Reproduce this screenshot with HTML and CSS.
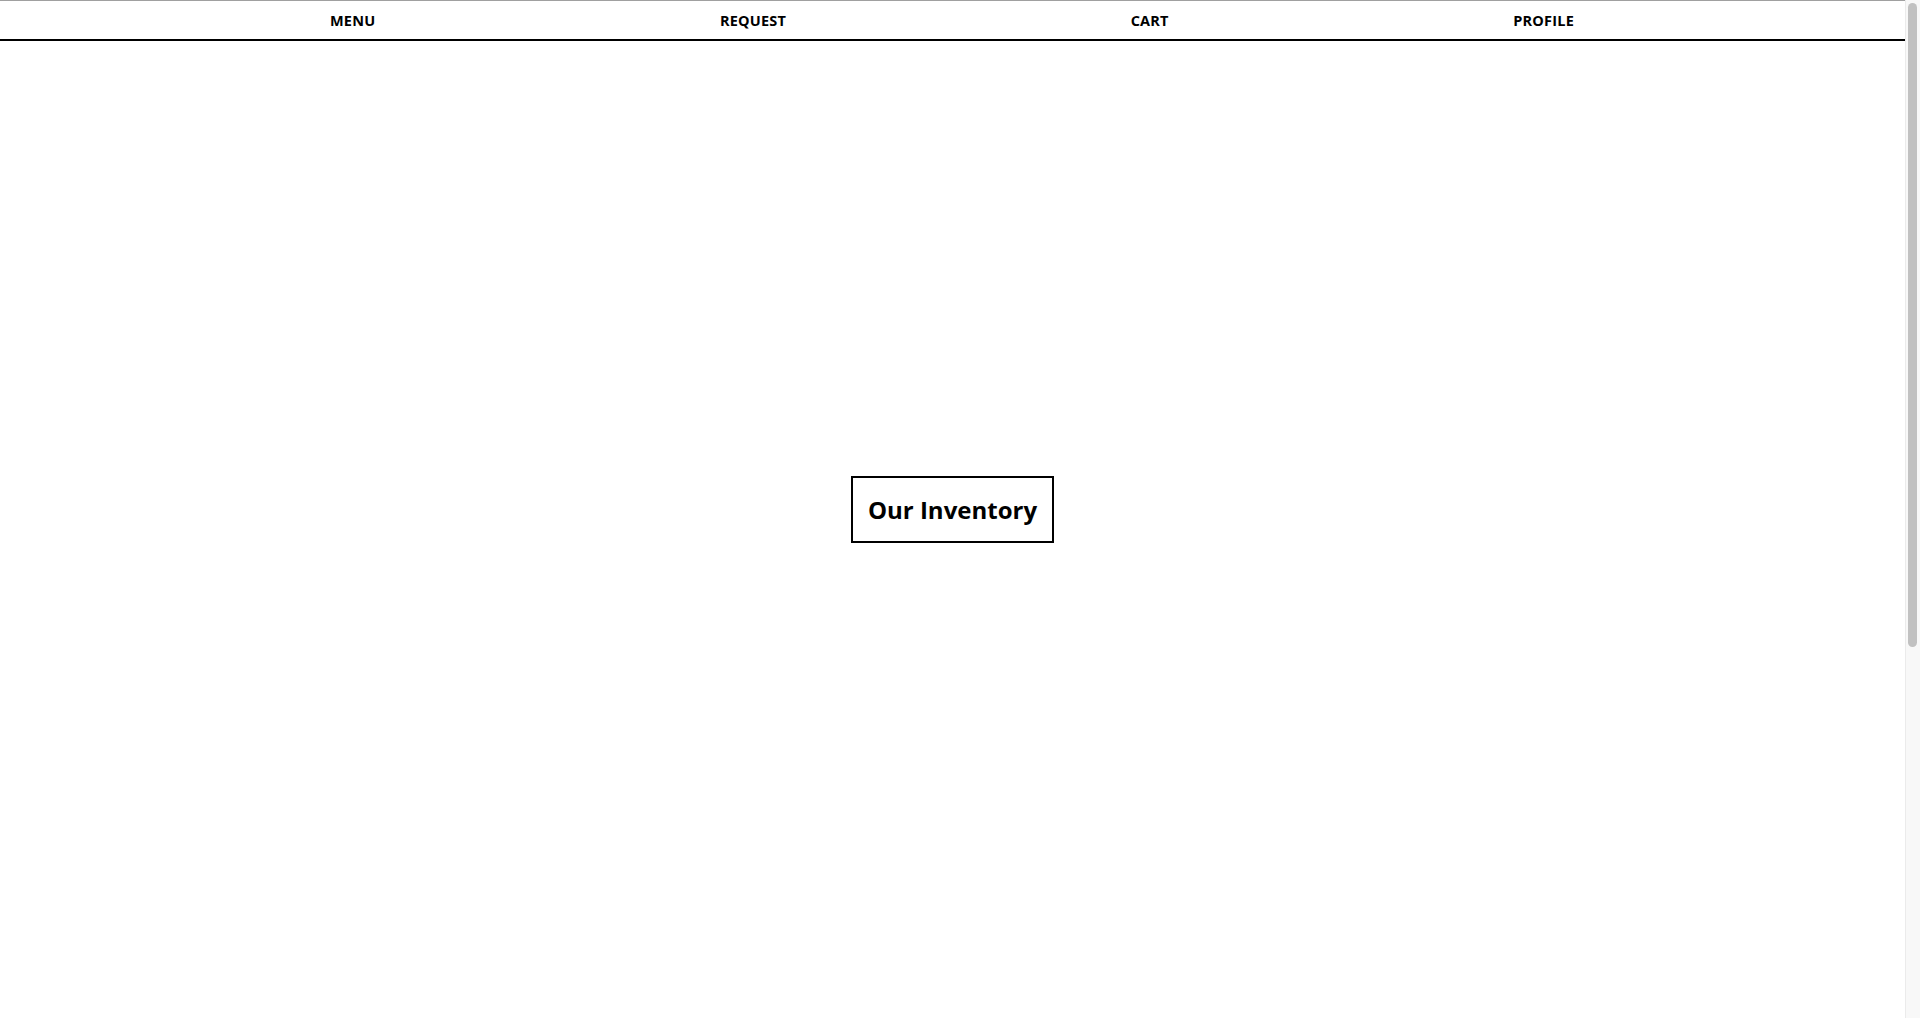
FILE: index.html
```html
<!DOCTYPE html>
<html lang="en">
<head>
<meta charset="utf-8">
<title>Our Inventory</title>
<link rel="stylesheet" href="styles.css">
</head>
<body>
<div class="hero">
  <nav class="nav">
    <a class="nav-link" href="#">MENU</a>
    <a class="nav-link" href="#">REQUEST</a>
    <a class="nav-link" href="#">CART</a>
    <a class="nav-link" href="#">PROFILE</a>
  </nav>
  <main class="center">
    <h1 class="title">Our Inventory</h1>
  </main>
  <div class="spacer"></div>
</div>
<section class="below"></section>
<div class="scrollbar" aria-hidden="true"><div class="scrollbar-thumb"></div></div>
</body>
</html>
```

FILE: styles.css
```css
html, body {
  margin: 0;
  padding: 0;
  background: #fff;
  color: #000;
  font-family: "Open Sans", "Liberation Sans", sans-serif;
}
body {
  margin-right: 15px;
  border-top: 1px solid #a0a0a0;
}
.hero {
  height: calc(100vh - 1px);
  display: grid;
  grid-template-rows: 40px 1fr 40px;
}
.nav {
  display: flex;
  justify-content: space-between;
  align-items: center;
  padding: 0 331px 0 330px;
  border-bottom: 2px solid #000;
  box-sizing: border-box;
  height: 40px;
}
.nav-link {
  color: #000;
  text-decoration: none;
  font-weight: 700;
  font-size: 14.5px;
  letter-spacing: 0.2px;
}
.center {
  display: flex;
  align-items: center;
  justify-content: center;
}
.title {
  margin: 0;
  border: 2px solid #000;
  padding: 14px 15px;
  font-size: 24px;
  line-height: 35px;
  font-weight: 700;
}
.below {
  height: 592px;
}
.scrollbar {
  position: fixed;
  top: 0;
  right: 0;
  bottom: 0;
  width: 15px;
  box-sizing: border-box;
  background: #f8f8f8;
  border-left: 1px solid #ebebeb;
  padding: 3px 3px 0 2px;
}
.scrollbar-thumb {
  height: 644px;
  background: #c1c1c1;
  border-radius: 5px;
}
```
